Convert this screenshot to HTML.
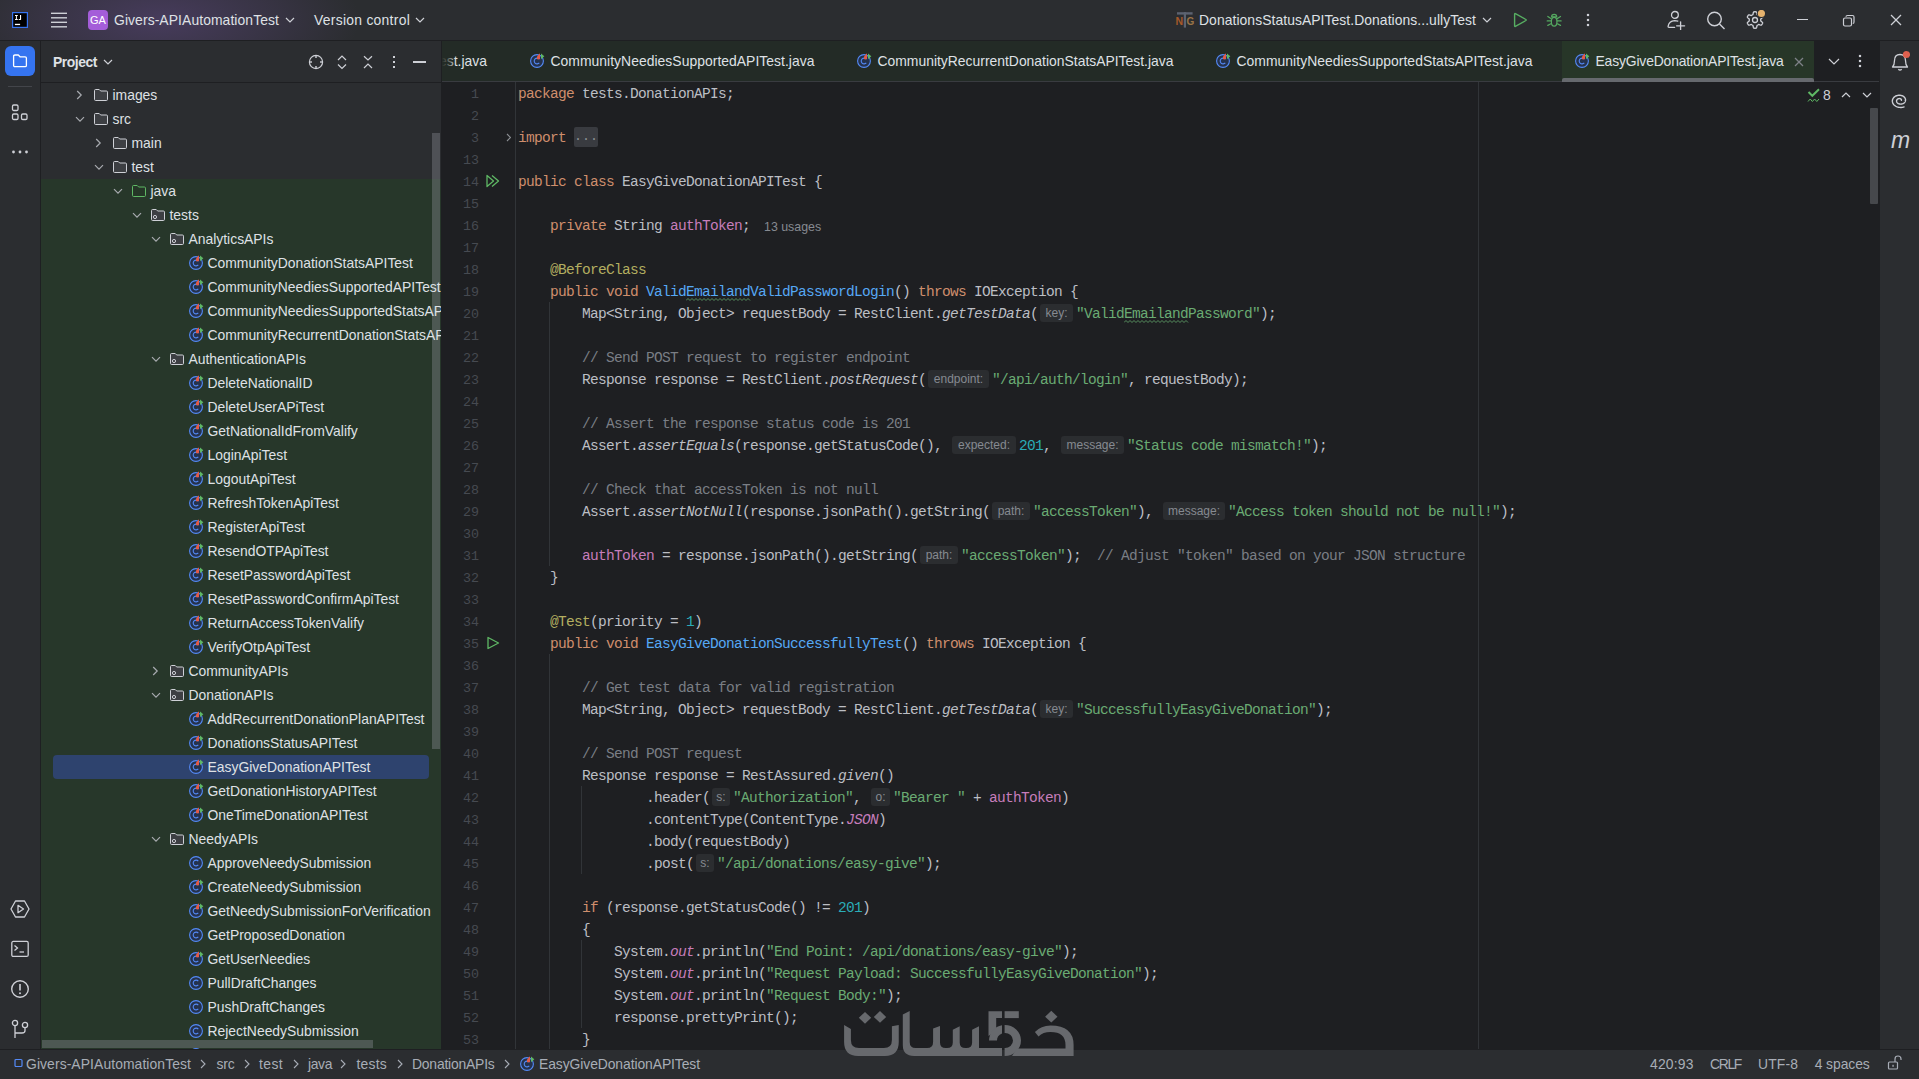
<!DOCTYPE html><html><head><meta charset="utf-8"><title>IntelliJ</title><style>
*{margin:0;padding:0;box-sizing:border-box;}
html,body{width:1919px;height:1079px;overflow:hidden;background:#2B2D30;}
body{position:relative;font-family:"Liberation Sans", sans-serif;}
.r,.t,.s,.c,.ln,.hint,.fold{position:absolute;}
.t{white-space:pre;}
.c{white-space:pre;font-family:"Liberation Mono", monospace;font-size:14.5px;letter-spacing:-0.7px;line-height:22px;height:22px;}
.ln{left:0;width:37px;text-align:right;font-family:"Liberation Mono", monospace;font-size:13.333px;line-height:22px;color:#464A51;}
.hint{height:18px;line-height:18px;border-radius:3px;background:#2B2D30;color:#868A91;font-family:"Liberation Sans", sans-serif;font-size:12px;text-align:center;white-space:pre;}
.fold{width:24px;height:20px;line-height:20px;background:#393B40;color:#8C8F94;font-family:"Liberation Mono", monospace;font-size:13.333px;border-radius:2px;text-align:center;}
</style></head><body><div class="r" style="left:0px;top:0px;width:1919px;height:1079px;background:#2B2D30;"></div><div class="r" style="left:0;top:0;width:700px;height:40px;background:radial-gradient(ellipse 200px 80px at 160px 20px, rgba(120,85,170,0.36), rgba(120,85,170,0.17) 55%, rgba(43,45,48,0) 100%);"></div><div class="r" style="left:0px;top:40px;width:1919px;height:1px;background:#1E1F22;"></div><div class="r" style="left:40px;top:41px;width:1px;height:1008px;background:#1E1F22;"></div><div class="r" style="left:441px;top:41px;width:1px;height:1008px;background:#1E1F22;"></div><div class="r" style="left:442px;top:41px;width:1438px;height:1008px;background:#1E1F22;"></div><div class="r" style="left:1879px;top:41px;width:1px;height:1008px;background:#1E1F22;"></div><div class="r" style="left:0px;top:1049px;width:1919px;height:1px;background:#1E1F22;"></div><svg class="s" style="left:12px;top:12px;" width="16" height="16" viewBox="0 0 16 16"><rect x="0.6" y="0.6" width="14.8" height="14.8" fill="#000" stroke="#3574F0" stroke-width="1.2"/><g fill="#fff"><rect x="3" y="3" width="2.8" height="1"/><rect x="3.9" y="3" width="1" height="5"/><rect x="3" y="7" width="2.8" height="1"/><rect x="8" y="3" width="1.1" height="4.6"/><rect x="6.7" y="7" width="2.2" height="1"/><rect x="2.9" y="11.8" width="5.2" height="1.3"/></g></svg><svg class="s" style="left:51px;top:12px;" width="16" height="16" viewBox="0 0 16 16"><rect x="0" y="0.6" width="16" height="1.4" fill="#CED0D6"/><rect x="0" y="5.1" width="16" height="1.4" fill="#CED0D6"/><rect x="0" y="9.6" width="16" height="1.4" fill="#CED0D6"/><rect x="0" y="14.1" width="16" height="1.4" fill="#CED0D6"/></svg><svg class="s" style="left:88px;top:10px;" width="20" height="20" viewBox="0 0 20 20"><rect x="0" y="0" width="20" height="20" rx="4" fill="#A45DD9"/><text x="10" y="14.3" text-anchor="middle" font-family="Liberation Sans" font-size="11" fill="#fff">GA</text></svg><svg class="s" style="left:285.0px;top:17.0px;" width="10" height="6.0" viewBox="0 0 10 6.0"><polyline points="1,1 5.0,5.0 9,1" fill="none" stroke="#CED0D6" stroke-width="1.2"/></svg><svg class="s" style="left:415.0px;top:17.0px;" width="10" height="6.0" viewBox="0 0 10 6.0"><polyline points="1,1 5.0,5.0 9,1" fill="none" stroke="#CED0D6" stroke-width="1.2"/></svg><svg class="s" style="left:1175px;top:11px;" width="20" height="18" viewBox="0 0 20 18"><rect x="2" y="1.2" width="15.6" height="2.4" fill="#5C6370"/><rect x="8.8" y="1.2" width="2.2" height="15.4" fill="#5C6370"/><text x="0.6" y="14" font-family="Liberation Sans" font-weight="bold" font-size="10.5" fill="#A65A2A">N</text><text x="11.6" y="14" font-family="Liberation Sans" font-weight="bold" font-size="10" fill="#9A7447">G</text></svg><svg class="s" style="left:1482.0px;top:17.0px;" width="10" height="6.0" viewBox="0 0 10 6.0"><polyline points="1,1 5.0,5.0 9,1" fill="none" stroke="#CED0D6" stroke-width="1.2"/></svg><svg class="s" style="left:1512px;top:12px;" width="16" height="16" viewBox="0 0 16 16"><path d="M2.6 2.2 Q2.6 1.3 3.4 1.7 L13.9 7.5 Q14.5 8 13.9 8.5 L3.4 14.3 Q2.6 14.7 2.6 13.8 Z" fill="none" stroke="#57AE62" stroke-width="1.4" stroke-linejoin="round"/></svg><svg class="s" style="left:1545px;top:11px;" width="18" height="18" viewBox="0 0 18 18"><g fill="none" stroke="#55A860" stroke-width="1.25" stroke-linecap="round"><ellipse cx="9.15" cy="10.8" rx="2.8" ry="4.4"/><path d="M6.6 5.9 A2.55 2.55 0 0 1 11.7 5.9 Z"/><line x1="2.8" y1="5.5" x2="5.9" y2="7.6"/><line x1="15.5" y1="5.5" x2="12.4" y2="7.6"/><line x1="2.2" y1="9.9" x2="6" y2="9.9"/><line x1="12.3" y1="9.9" x2="16.1" y2="9.9"/><line x1="5.9" y1="12.8" x2="2.8" y2="14.4"/><line x1="12.4" y1="12.8" x2="15.5" y2="14.4"/></g></svg><svg class="s" style="left:1585px;top:12px;" width="6" height="16" viewBox="0 0 6 16"><rect x="1.9" y="1.9" width="2.2" height="2.2" fill="#CED0D6"/><rect x="1.9" y="6.9" width="2.2" height="2.2" fill="#CED0D6"/><rect x="1.9" y="11.9" width="2.2" height="2.2" fill="#CED0D6"/></svg><svg class="s" style="left:1666px;top:10px;" width="20" height="20" viewBox="0 0 20 20"><g fill="none" stroke="#CED0D6" stroke-width="1.3" stroke-linecap="round"><circle cx="8.9" cy="4.9" r="3.4"/><path d="M11.8 11.1 Q10.4 10.6 8.7 10.6 Q2.9 10.8 2.1 16.4 Q2 17.4 3 17.4 H8.6"/><line x1="14.6" y1="11.8" x2="14.6" y2="19.8"/><line x1="10.6" y1="15.8" x2="18.6" y2="15.8"/></g></svg><svg class="s" style="left:1706px;top:10px;" width="20" height="20" viewBox="0 0 20 20"><g fill="none" stroke="#CED0D6" stroke-width="1.4"><circle cx="8.5" cy="9" r="6.8"/><line x1="13.5" y1="14" x2="18.5" y2="19"/></g></svg><svg class="s" style="left:1745px;top:10px;" width="22" height="22" viewBox="0 0 22 22"><g fill="none" stroke="#CED0D6" stroke-width="1.3"><polygon points="15.75,10.00 15.74,10.30 15.72,10.60 15.68,10.90 16.17,11.31 16.76,11.81 17.32,12.38 17.70,12.96 17.54,13.36 17.35,13.75 17.14,14.12 16.92,14.49 16.67,14.85 16.41,15.19 15.72,15.15 14.95,14.95 14.22,14.69 13.62,14.47 13.38,14.65 13.13,14.82 12.88,14.98 12.61,15.12 12.34,15.25 12.06,15.37 11.95,16.00 11.81,16.76 11.60,17.53 11.29,18.15 10.86,18.20 10.43,18.24 10.00,18.25 9.57,18.24 9.14,18.20 8.71,18.15 8.40,17.53 8.19,16.76 8.05,16.00 7.94,15.37 7.66,15.25 7.39,15.12 7.13,14.98 6.87,14.82 6.62,14.65 6.38,14.47 5.78,14.69 5.05,14.95 4.28,15.15 3.59,15.19 3.33,14.85 3.08,14.49 2.86,14.12 2.65,13.75 2.46,13.36 2.30,12.96 2.68,12.38 3.24,11.81 3.83,11.31 4.32,10.90 4.28,10.60 4.26,10.30 4.25,10.00 4.26,9.70 4.28,9.40 4.32,9.10 3.83,8.69 3.24,8.19 2.68,7.62 2.30,7.04 2.46,6.64 2.65,6.25 2.86,5.87 3.08,5.51 3.33,5.15 3.59,4.81 4.28,4.85 5.05,5.05 5.78,5.31 6.38,5.53 6.62,5.35 6.87,5.18 7.12,5.02 7.39,4.88 7.66,4.75 7.94,4.63 8.05,4.00 8.19,3.24 8.40,2.47 8.71,1.85 9.14,1.80 9.57,1.76 10.00,1.75 10.43,1.76 10.86,1.80 11.29,1.85 11.60,2.47 11.81,3.24 11.95,4.00 12.06,4.63 12.34,4.75 12.61,4.88 12.88,5.02 13.13,5.18 13.38,5.35 13.62,5.53 14.22,5.31 14.95,5.05 15.72,4.85 16.41,4.81 16.67,5.15 16.92,5.51 17.14,5.87 17.35,6.25 17.54,6.64 17.70,7.04 17.32,7.62 16.76,8.19 16.17,8.69 15.68,9.10 15.72,9.40 15.74,9.70" stroke-linejoin="round"/><circle cx="10" cy="10" r="2.5"/></g><circle cx="16.4" cy="3.5" r="4.6" fill="#2B2D30"/><circle cx="16.4" cy="3.5" r="3.6" fill="#E5B26D"/></svg><div class="r" style="left:1797px;top:19px;width:11px;height:1.3px;background:#CED0D6;"></div><svg class="s" style="left:1842px;top:14px;" width="14" height="13" viewBox="0 0 14 13"><g fill="none" stroke="#CED0D6" stroke-width="1.2"><rect x="1.5" y="4" width="8" height="8" rx="1.5"/><path d="M4 2.8 Q4 1.5 5.5 1.5 H10.5 Q12 1.5 12 3 V8 Q12 9.5 10.8 9.5"/></g></svg><svg class="s" style="left:1889px;top:13px;" width="14" height="14" viewBox="0 0 14 14"><g stroke="#CED0D6" stroke-width="1.3"><line x1="2" y1="2" x2="12" y2="12"/><line x1="12" y1="2" x2="2" y2="12"/></g></svg><div class="t" style="left:114px;top:0px;height:40px;line-height:40px;font-size:13.9px;color:#DFE1E5;font-weight:normal;letter-spacing:0.088px;">Givers-APIAutomationTest</div><div class="t" style="left:314px;top:0px;height:40px;line-height:40px;font-size:13.9px;color:#DFE1E5;font-weight:normal;letter-spacing:0.274px;">Version control</div><div class="t" style="left:1199px;top:0px;height:40px;line-height:40px;font-size:13.9px;color:#DFE1E5;font-weight:normal;letter-spacing:0.067px;">DonationsStatusAPITest.Donations...ullyTest</div><div class="r" style="left:5px;top:46px;width:30px;height:30px;border-radius:6px;background:#3574F0;"></div><svg class="s" style="left:12px;top:53px;" width="16" height="16" viewBox="0 0 16 16"><path d="M1.6 3.3 Q1.6 2 2.9 2 H6.3 L8 3.8 H13.1 Q14.4 3.8 14.4 5.1 V12.4 Q14.4 13.7 13.1 13.7 H2.9 Q1.6 13.7 1.6 12.4 Z" fill="none" stroke="#fff" stroke-width="1.3" stroke-linejoin="round"/></svg><div class="r" style="left:8px;top:86px;width:24px;height:1px;background:#43454A;"></div><svg class="s" style="left:11px;top:104px;" width="18" height="18" viewBox="0 0 18 18"><g fill="none" stroke="#CED0D6" stroke-width="1.3"><rect x="1.5" y="1" width="5.5" height="5.5" rx="1.3"/><rect x="1.5" y="10" width="5.5" height="5.5" rx="1.3"/><rect x="10.5" y="10" width="5.5" height="5.5" rx="1.3"/></g></svg><svg class="s" style="left:11px;top:148px;" width="18" height="8" viewBox="0 0 18 8"><circle cx="2.5" cy="4" r="1.4" fill="#CED0D6"/><circle cx="9" cy="4" r="1.4" fill="#CED0D6"/><circle cx="15.5" cy="4" r="1.4" fill="#CED0D6"/></svg><svg class="s" style="left:10px;top:899px;" width="20" height="20" viewBox="0 0 20 20"><g fill="none" stroke="#CED0D6" stroke-width="1.3" stroke-linejoin="round"><path d="M5.5 2 H14.5 L19 10 L14.5 18 H5.5 L1 10 Z"/><path d="M8 6.3 L13.5 10 L8 13.7 Z"/></g></svg><svg class="s" style="left:10px;top:940px;" width="20" height="18" viewBox="0 0 20 18"><g fill="none" stroke="#CED0D6" stroke-width="1.3"><rect x="1.8" y="1.4" width="16.4" height="15" rx="1.5"/><polyline points="4.5,5.5 7.5,8 4.5,10.5"/><line x1="9.5" y1="12" x2="14" y2="12"/></g></svg><svg class="s" style="left:10px;top:979px;" width="20" height="20" viewBox="0 0 20 20"><g fill="none" stroke="#CED0D6" stroke-width="1.4"><circle cx="10" cy="10" r="8.3"/></g><rect x="9.2" y="5" width="1.6" height="6.5" fill="#CED0D6"/><circle cx="10" cy="14.2" r="1" fill="#CED0D6"/></svg><svg class="s" style="left:10px;top:1019px;" width="20" height="20" viewBox="0 0 20 20"><g fill="none" stroke="#CED0D6" stroke-width="1.3"><circle cx="5" cy="4" r="2.6"/><circle cx="15" cy="6" r="2.6"/><line x1="5" y1="6.6" x2="5" y2="19"/><path d="M15 8.6 V11.5 Q15 14 12 14 H5"/></g></svg><div class="r" style="left:41px;top:82px;width:400px;height:1px;background:#1E1F22;"></div><svg class="s" style="left:103.0px;top:59.0px;" width="10" height="6.0" viewBox="0 0 10 6.0"><polyline points="1,1 5.0,5.0 9,1" fill="none" stroke="#CED0D6" stroke-width="1.2"/></svg><svg class="s" style="left:307px;top:53px;" width="18" height="18" viewBox="0 0 18 18"><g fill="none" stroke="#CED0D6" stroke-width="1.2"><circle cx="9" cy="9" r="6.6"/></g><g stroke="#CED0D6" stroke-width="1.4"><line x1="9" y1="2.6" x2="9" y2="5"/><line x1="9" y1="13" x2="9" y2="15.4"/><line x1="2.6" y1="9" x2="5" y2="9"/><line x1="13" y1="9" x2="15.4" y2="9"/></g></svg><svg class="s" style="left:336px;top:54px;" width="12" height="16" viewBox="0 0 12 16"><g fill="none" stroke="#CED0D6" stroke-width="1.2"><polyline points="2,6 6,2 10,6"/><polyline points="2,10.5 6,14.5 10,10.5"/></g></svg><svg class="s" style="left:362px;top:54px;" width="12" height="16" viewBox="0 0 12 16"><g fill="none" stroke="#CED0D6" stroke-width="1.2"><polyline points="2,2.2 6,6 10,2.2"/><polyline points="2,14 6,10 10,14"/></g></svg><svg class="s" style="left:392px;top:54px;" width="4" height="16" viewBox="0 0 4 16"><rect x="1" y="2" width="2" height="2" fill="#CED0D6"/><rect x="1" y="7" width="2" height="2" fill="#CED0D6"/><rect x="1" y="12" width="2" height="2" fill="#CED0D6"/></svg><div class="r" style="left:413px;top:61.3px;width:13px;height:1.5px;background:#CED0D6;"></div><div class="r" style="left:41px;top:179px;width:400px;height:870px;background:#27372A;"></div><div class="r" style="left:53px;top:755px;width:376px;height:24px;border-radius:4px;background:#2E436E;"></div><div class="t" style="left:53px;top:42px;height:41px;line-height:41px;font-size:13.9px;color:#DFE1E5;font-weight:bold;letter-spacing:-0.442px;">Project</div><div class="r" style="left:432px;top:133px;width:8px;height:616px;border-radius:0px;background:rgba(140,143,150,0.38);"></div><div class="r" style="left:42px;top:1040px;width:331px;height:8px;border-radius:0px;background:rgba(140,143,150,0.38);"></div><div class="r" style="left:41px;top:83px;width:400px;height:966px;overflow:hidden;"><svg class="s" style="left:35.0px;top:7px" width="7" height="10" viewBox="0 0 7 10"><polyline points="1.2,1 5.2,5 1.2,9" fill="none" stroke="#A8ABB0" stroke-width="1.2"/></svg><svg class="s" style="left:52px;top:4px;" width="16" height="16" viewBox="0 0 16 16"><path d="M1.5 3.6 Q1.5 2.5 2.6 2.5 H6.2 L7.7 4 H13.4 Q14.5 4 14.5 5.1 V12.4 Q14.5 13.5 13.4 13.5 H2.6 Q1.5 13.5 1.5 12.4 Z" fill="#3D3F43" stroke="#CED0D6" stroke-width="1"/></svg><svg class="s" style="left:33.5px;top:32.5px" width="10" height="7" viewBox="0 0 10 7"><polyline points="1,1.2 5,5.2 9,1.2" fill="none" stroke="#A8ABB0" stroke-width="1.2"/></svg><svg class="s" style="left:52px;top:28px;" width="16" height="16" viewBox="0 0 16 16"><path d="M1.5 3.6 Q1.5 2.5 2.6 2.5 H6.2 L7.7 4 H13.4 Q14.5 4 14.5 5.1 V12.4 Q14.5 13.5 13.4 13.5 H2.6 Q1.5 13.5 1.5 12.4 Z" fill="#3D3F43" stroke="#CED0D6" stroke-width="1"/></svg><svg class="s" style="left:54.0px;top:55px" width="7" height="10" viewBox="0 0 7 10"><polyline points="1.2,1 5.2,5 1.2,9" fill="none" stroke="#A8ABB0" stroke-width="1.2"/></svg><svg class="s" style="left:71px;top:52px;" width="16" height="16" viewBox="0 0 16 16"><path d="M1.5 3.6 Q1.5 2.5 2.6 2.5 H6.2 L7.7 4 H13.4 Q14.5 4 14.5 5.1 V12.4 Q14.5 13.5 13.4 13.5 H2.6 Q1.5 13.5 1.5 12.4 Z" fill="#3D3F43" stroke="#CED0D6" stroke-width="1"/></svg><svg class="s" style="left:52.5px;top:80.5px" width="10" height="7" viewBox="0 0 10 7"><polyline points="1,1.2 5,5.2 9,1.2" fill="none" stroke="#A8ABB0" stroke-width="1.2"/></svg><svg class="s" style="left:71px;top:76px;" width="16" height="16" viewBox="0 0 16 16"><path d="M1.5 3.6 Q1.5 2.5 2.6 2.5 H6.2 L7.7 4 H13.4 Q14.5 4 14.5 5.1 V12.4 Q14.5 13.5 13.4 13.5 H2.6 Q1.5 13.5 1.5 12.4 Z" fill="#3D3F43" stroke="#CED0D6" stroke-width="1"/></svg><svg class="s" style="left:71.5px;top:104.5px" width="10" height="7" viewBox="0 0 10 7"><polyline points="1,1.2 5,5.2 9,1.2" fill="none" stroke="#A8ABB0" stroke-width="1.2"/></svg><svg class="s" style="left:90px;top:100px;" width="16" height="16" viewBox="0 0 16 16"><path d="M1.5 3.6 Q1.5 2.5 2.6 2.5 H6.2 L7.7 4 H13.4 Q14.5 4 14.5 5.1 V12.4 Q14.5 13.5 13.4 13.5 H2.6 Q1.5 13.5 1.5 12.4 Z" fill="#253627" stroke="#5FB865" stroke-width="1"/></svg><svg class="s" style="left:90.5px;top:128.5px" width="10" height="7" viewBox="0 0 10 7"><polyline points="1,1.2 5,5.2 9,1.2" fill="none" stroke="#A8ABB0" stroke-width="1.2"/></svg><svg class="s" style="left:109px;top:124px;" width="16" height="16" viewBox="0 0 16 16"><path d="M1.5 3.6 Q1.5 2.5 2.6 2.5 H6.2 L7.7 4 H13.4 Q14.5 4 14.5 5.1 V12.4 Q14.5 13.5 13.4 13.5 H2.6 Q1.5 13.5 1.5 12.4 Z" fill="#3D3F43" stroke="#CED0D6" stroke-width="1"/><circle cx="5" cy="10" r="1.6" fill="none" stroke="#CED0D6" stroke-width="1"/></svg><svg class="s" style="left:109.5px;top:152.5px" width="10" height="7" viewBox="0 0 10 7"><polyline points="1,1.2 5,5.2 9,1.2" fill="none" stroke="#A8ABB0" stroke-width="1.2"/></svg><svg class="s" style="left:128px;top:148px;" width="16" height="16" viewBox="0 0 16 16"><path d="M1.5 3.6 Q1.5 2.5 2.6 2.5 H6.2 L7.7 4 H13.4 Q14.5 4 14.5 5.1 V12.4 Q14.5 13.5 13.4 13.5 H2.6 Q1.5 13.5 1.5 12.4 Z" fill="#3D3F43" stroke="#CED0D6" stroke-width="1"/><circle cx="5" cy="10" r="1.6" fill="none" stroke="#CED0D6" stroke-width="1"/></svg><svg class="s" style="left:147px;top:172px;" width="16" height="16" viewBox="0 0 16 16"><circle cx="8" cy="8" r="6.4" fill="#25324D" stroke="#548AF7" stroke-width="1.1"/><path d="M10.3 6.1 A2.9 2.9 0 1 0 10.3 9.9" fill="none" stroke="#548AF7" stroke-width="1.1"/><path d="M11 0.2 L11 6.3 L8 6.3 L8 3.6 Z" fill="#E35A48"/><path d="M12 0.4 L15.3 3.3 L12 6.2 Z" fill="#5FB865"/></svg><svg class="s" style="left:147px;top:196px;" width="16" height="16" viewBox="0 0 16 16"><circle cx="8" cy="8" r="6.4" fill="#25324D" stroke="#548AF7" stroke-width="1.1"/><path d="M10.3 6.1 A2.9 2.9 0 1 0 10.3 9.9" fill="none" stroke="#548AF7" stroke-width="1.1"/><path d="M11 0.2 L11 6.3 L8 6.3 L8 3.6 Z" fill="#E35A48"/><path d="M12 0.4 L15.3 3.3 L12 6.2 Z" fill="#5FB865"/></svg><svg class="s" style="left:147px;top:220px;" width="16" height="16" viewBox="0 0 16 16"><circle cx="8" cy="8" r="6.4" fill="#25324D" stroke="#548AF7" stroke-width="1.1"/><path d="M10.3 6.1 A2.9 2.9 0 1 0 10.3 9.9" fill="none" stroke="#548AF7" stroke-width="1.1"/><path d="M11 0.2 L11 6.3 L8 6.3 L8 3.6 Z" fill="#E35A48"/><path d="M12 0.4 L15.3 3.3 L12 6.2 Z" fill="#5FB865"/></svg><svg class="s" style="left:147px;top:244px;" width="16" height="16" viewBox="0 0 16 16"><circle cx="8" cy="8" r="6.4" fill="#25324D" stroke="#548AF7" stroke-width="1.1"/><path d="M10.3 6.1 A2.9 2.9 0 1 0 10.3 9.9" fill="none" stroke="#548AF7" stroke-width="1.1"/><path d="M11 0.2 L11 6.3 L8 6.3 L8 3.6 Z" fill="#E35A48"/><path d="M12 0.4 L15.3 3.3 L12 6.2 Z" fill="#5FB865"/></svg><svg class="s" style="left:109.5px;top:272.5px" width="10" height="7" viewBox="0 0 10 7"><polyline points="1,1.2 5,5.2 9,1.2" fill="none" stroke="#A8ABB0" stroke-width="1.2"/></svg><svg class="s" style="left:128px;top:268px;" width="16" height="16" viewBox="0 0 16 16"><path d="M1.5 3.6 Q1.5 2.5 2.6 2.5 H6.2 L7.7 4 H13.4 Q14.5 4 14.5 5.1 V12.4 Q14.5 13.5 13.4 13.5 H2.6 Q1.5 13.5 1.5 12.4 Z" fill="#3D3F43" stroke="#CED0D6" stroke-width="1"/><circle cx="5" cy="10" r="1.6" fill="none" stroke="#CED0D6" stroke-width="1"/></svg><svg class="s" style="left:147px;top:292px;" width="16" height="16" viewBox="0 0 16 16"><circle cx="8" cy="8" r="6.4" fill="#25324D" stroke="#548AF7" stroke-width="1.1"/><path d="M10.3 6.1 A2.9 2.9 0 1 0 10.3 9.9" fill="none" stroke="#548AF7" stroke-width="1.1"/><path d="M11 0.2 L11 6.3 L8 6.3 L8 3.6 Z" fill="#E35A48"/><path d="M12 0.4 L15.3 3.3 L12 6.2 Z" fill="#5FB865"/></svg><svg class="s" style="left:147px;top:316px;" width="16" height="16" viewBox="0 0 16 16"><circle cx="8" cy="8" r="6.4" fill="#25324D" stroke="#548AF7" stroke-width="1.1"/><path d="M10.3 6.1 A2.9 2.9 0 1 0 10.3 9.9" fill="none" stroke="#548AF7" stroke-width="1.1"/><path d="M11 0.2 L11 6.3 L8 6.3 L8 3.6 Z" fill="#E35A48"/><path d="M12 0.4 L15.3 3.3 L12 6.2 Z" fill="#5FB865"/></svg><svg class="s" style="left:147px;top:340px;" width="16" height="16" viewBox="0 0 16 16"><circle cx="8" cy="8" r="6.4" fill="#25324D" stroke="#548AF7" stroke-width="1.1"/><path d="M10.3 6.1 A2.9 2.9 0 1 0 10.3 9.9" fill="none" stroke="#548AF7" stroke-width="1.1"/><path d="M11 0.2 L11 6.3 L8 6.3 L8 3.6 Z" fill="#E35A48"/><path d="M12 0.4 L15.3 3.3 L12 6.2 Z" fill="#5FB865"/></svg><svg class="s" style="left:147px;top:364px;" width="16" height="16" viewBox="0 0 16 16"><circle cx="8" cy="8" r="6.4" fill="#25324D" stroke="#548AF7" stroke-width="1.1"/><path d="M10.3 6.1 A2.9 2.9 0 1 0 10.3 9.9" fill="none" stroke="#548AF7" stroke-width="1.1"/><path d="M11 0.2 L11 6.3 L8 6.3 L8 3.6 Z" fill="#E35A48"/><path d="M12 0.4 L15.3 3.3 L12 6.2 Z" fill="#5FB865"/></svg><svg class="s" style="left:147px;top:388px;" width="16" height="16" viewBox="0 0 16 16"><circle cx="8" cy="8" r="6.4" fill="#25324D" stroke="#548AF7" stroke-width="1.1"/><path d="M10.3 6.1 A2.9 2.9 0 1 0 10.3 9.9" fill="none" stroke="#548AF7" stroke-width="1.1"/><path d="M11 0.2 L11 6.3 L8 6.3 L8 3.6 Z" fill="#E35A48"/><path d="M12 0.4 L15.3 3.3 L12 6.2 Z" fill="#5FB865"/></svg><svg class="s" style="left:147px;top:412px;" width="16" height="16" viewBox="0 0 16 16"><circle cx="8" cy="8" r="6.4" fill="#25324D" stroke="#548AF7" stroke-width="1.1"/><path d="M10.3 6.1 A2.9 2.9 0 1 0 10.3 9.9" fill="none" stroke="#548AF7" stroke-width="1.1"/><path d="M11 0.2 L11 6.3 L8 6.3 L8 3.6 Z" fill="#E35A48"/><path d="M12 0.4 L15.3 3.3 L12 6.2 Z" fill="#5FB865"/></svg><svg class="s" style="left:147px;top:436px;" width="16" height="16" viewBox="0 0 16 16"><circle cx="8" cy="8" r="6.4" fill="#25324D" stroke="#548AF7" stroke-width="1.1"/><path d="M10.3 6.1 A2.9 2.9 0 1 0 10.3 9.9" fill="none" stroke="#548AF7" stroke-width="1.1"/><path d="M11 0.2 L11 6.3 L8 6.3 L8 3.6 Z" fill="#E35A48"/><path d="M12 0.4 L15.3 3.3 L12 6.2 Z" fill="#5FB865"/></svg><svg class="s" style="left:147px;top:460px;" width="16" height="16" viewBox="0 0 16 16"><circle cx="8" cy="8" r="6.4" fill="#25324D" stroke="#548AF7" stroke-width="1.1"/><path d="M10.3 6.1 A2.9 2.9 0 1 0 10.3 9.9" fill="none" stroke="#548AF7" stroke-width="1.1"/><path d="M11 0.2 L11 6.3 L8 6.3 L8 3.6 Z" fill="#E35A48"/><path d="M12 0.4 L15.3 3.3 L12 6.2 Z" fill="#5FB865"/></svg><svg class="s" style="left:147px;top:484px;" width="16" height="16" viewBox="0 0 16 16"><circle cx="8" cy="8" r="6.4" fill="#25324D" stroke="#548AF7" stroke-width="1.1"/><path d="M10.3 6.1 A2.9 2.9 0 1 0 10.3 9.9" fill="none" stroke="#548AF7" stroke-width="1.1"/><path d="M11 0.2 L11 6.3 L8 6.3 L8 3.6 Z" fill="#E35A48"/><path d="M12 0.4 L15.3 3.3 L12 6.2 Z" fill="#5FB865"/></svg><svg class="s" style="left:147px;top:508px;" width="16" height="16" viewBox="0 0 16 16"><circle cx="8" cy="8" r="6.4" fill="#25324D" stroke="#548AF7" stroke-width="1.1"/><path d="M10.3 6.1 A2.9 2.9 0 1 0 10.3 9.9" fill="none" stroke="#548AF7" stroke-width="1.1"/><path d="M11 0.2 L11 6.3 L8 6.3 L8 3.6 Z" fill="#E35A48"/><path d="M12 0.4 L15.3 3.3 L12 6.2 Z" fill="#5FB865"/></svg><svg class="s" style="left:147px;top:532px;" width="16" height="16" viewBox="0 0 16 16"><circle cx="8" cy="8" r="6.4" fill="#25324D" stroke="#548AF7" stroke-width="1.1"/><path d="M10.3 6.1 A2.9 2.9 0 1 0 10.3 9.9" fill="none" stroke="#548AF7" stroke-width="1.1"/><path d="M11 0.2 L11 6.3 L8 6.3 L8 3.6 Z" fill="#E35A48"/><path d="M12 0.4 L15.3 3.3 L12 6.2 Z" fill="#5FB865"/></svg><svg class="s" style="left:147px;top:556px;" width="16" height="16" viewBox="0 0 16 16"><circle cx="8" cy="8" r="6.4" fill="#25324D" stroke="#548AF7" stroke-width="1.1"/><path d="M10.3 6.1 A2.9 2.9 0 1 0 10.3 9.9" fill="none" stroke="#548AF7" stroke-width="1.1"/><path d="M11 0.2 L11 6.3 L8 6.3 L8 3.6 Z" fill="#E35A48"/><path d="M12 0.4 L15.3 3.3 L12 6.2 Z" fill="#5FB865"/></svg><svg class="s" style="left:111.0px;top:583px" width="7" height="10" viewBox="0 0 7 10"><polyline points="1.2,1 5.2,5 1.2,9" fill="none" stroke="#A8ABB0" stroke-width="1.2"/></svg><svg class="s" style="left:128px;top:580px;" width="16" height="16" viewBox="0 0 16 16"><path d="M1.5 3.6 Q1.5 2.5 2.6 2.5 H6.2 L7.7 4 H13.4 Q14.5 4 14.5 5.1 V12.4 Q14.5 13.5 13.4 13.5 H2.6 Q1.5 13.5 1.5 12.4 Z" fill="#3D3F43" stroke="#CED0D6" stroke-width="1"/><circle cx="5" cy="10" r="1.6" fill="none" stroke="#CED0D6" stroke-width="1"/></svg><svg class="s" style="left:109.5px;top:608.5px" width="10" height="7" viewBox="0 0 10 7"><polyline points="1,1.2 5,5.2 9,1.2" fill="none" stroke="#A8ABB0" stroke-width="1.2"/></svg><svg class="s" style="left:128px;top:604px;" width="16" height="16" viewBox="0 0 16 16"><path d="M1.5 3.6 Q1.5 2.5 2.6 2.5 H6.2 L7.7 4 H13.4 Q14.5 4 14.5 5.1 V12.4 Q14.5 13.5 13.4 13.5 H2.6 Q1.5 13.5 1.5 12.4 Z" fill="#3D3F43" stroke="#CED0D6" stroke-width="1"/><circle cx="5" cy="10" r="1.6" fill="none" stroke="#CED0D6" stroke-width="1"/></svg><svg class="s" style="left:147px;top:628px;" width="16" height="16" viewBox="0 0 16 16"><circle cx="8" cy="8" r="6.4" fill="#25324D" stroke="#548AF7" stroke-width="1.1"/><path d="M10.3 6.1 A2.9 2.9 0 1 0 10.3 9.9" fill="none" stroke="#548AF7" stroke-width="1.1"/><path d="M11 0.2 L11 6.3 L8 6.3 L8 3.6 Z" fill="#E35A48"/><path d="M12 0.4 L15.3 3.3 L12 6.2 Z" fill="#5FB865"/></svg><svg class="s" style="left:147px;top:652px;" width="16" height="16" viewBox="0 0 16 16"><circle cx="8" cy="8" r="6.4" fill="#25324D" stroke="#548AF7" stroke-width="1.1"/><path d="M10.3 6.1 A2.9 2.9 0 1 0 10.3 9.9" fill="none" stroke="#548AF7" stroke-width="1.1"/><path d="M11 0.2 L11 6.3 L8 6.3 L8 3.6 Z" fill="#E35A48"/><path d="M12 0.4 L15.3 3.3 L12 6.2 Z" fill="#5FB865"/></svg><svg class="s" style="left:147px;top:676px;" width="16" height="16" viewBox="0 0 16 16"><circle cx="8" cy="8" r="6.4" fill="#25324D" stroke="#548AF7" stroke-width="1.1"/><path d="M10.3 6.1 A2.9 2.9 0 1 0 10.3 9.9" fill="none" stroke="#548AF7" stroke-width="1.1"/><path d="M11 0.2 L11 6.3 L8 6.3 L8 3.6 Z" fill="#E35A48"/><path d="M12 0.4 L15.3 3.3 L12 6.2 Z" fill="#5FB865"/></svg><svg class="s" style="left:147px;top:700px;" width="16" height="16" viewBox="0 0 16 16"><circle cx="8" cy="8" r="6.4" fill="#25324D" stroke="#548AF7" stroke-width="1.1"/><path d="M10.3 6.1 A2.9 2.9 0 1 0 10.3 9.9" fill="none" stroke="#548AF7" stroke-width="1.1"/><path d="M11 0.2 L11 6.3 L8 6.3 L8 3.6 Z" fill="#E35A48"/><path d="M12 0.4 L15.3 3.3 L12 6.2 Z" fill="#5FB865"/></svg><svg class="s" style="left:147px;top:724px;" width="16" height="16" viewBox="0 0 16 16"><circle cx="8" cy="8" r="6.4" fill="#25324D" stroke="#548AF7" stroke-width="1.1"/><path d="M10.3 6.1 A2.9 2.9 0 1 0 10.3 9.9" fill="none" stroke="#548AF7" stroke-width="1.1"/><path d="M11 0.2 L11 6.3 L8 6.3 L8 3.6 Z" fill="#E35A48"/><path d="M12 0.4 L15.3 3.3 L12 6.2 Z" fill="#5FB865"/></svg><svg class="s" style="left:109.5px;top:752.5px" width="10" height="7" viewBox="0 0 10 7"><polyline points="1,1.2 5,5.2 9,1.2" fill="none" stroke="#A8ABB0" stroke-width="1.2"/></svg><svg class="s" style="left:128px;top:748px;" width="16" height="16" viewBox="0 0 16 16"><path d="M1.5 3.6 Q1.5 2.5 2.6 2.5 H6.2 L7.7 4 H13.4 Q14.5 4 14.5 5.1 V12.4 Q14.5 13.5 13.4 13.5 H2.6 Q1.5 13.5 1.5 12.4 Z" fill="#3D3F43" stroke="#CED0D6" stroke-width="1"/><circle cx="5" cy="10" r="1.6" fill="none" stroke="#CED0D6" stroke-width="1"/></svg><svg class="s" style="left:147px;top:772px;" width="16" height="16" viewBox="0 0 16 16"><circle cx="8" cy="8" r="6.4" fill="#25324D" stroke="#548AF7" stroke-width="1.1"/><path d="M10.3 6.1 A2.9 2.9 0 1 0 10.3 9.9" fill="none" stroke="#548AF7" stroke-width="1.1"/></svg><svg class="s" style="left:147px;top:796px;" width="16" height="16" viewBox="0 0 16 16"><circle cx="8" cy="8" r="6.4" fill="#25324D" stroke="#548AF7" stroke-width="1.1"/><path d="M10.3 6.1 A2.9 2.9 0 1 0 10.3 9.9" fill="none" stroke="#548AF7" stroke-width="1.1"/><path d="M11 0.2 L11 6.3 L8 6.3 L8 3.6 Z" fill="#E35A48"/><path d="M12 0.4 L15.3 3.3 L12 6.2 Z" fill="#5FB865"/></svg><svg class="s" style="left:147px;top:820px;" width="16" height="16" viewBox="0 0 16 16"><circle cx="8" cy="8" r="6.4" fill="#25324D" stroke="#548AF7" stroke-width="1.1"/><path d="M10.3 6.1 A2.9 2.9 0 1 0 10.3 9.9" fill="none" stroke="#548AF7" stroke-width="1.1"/><path d="M11 0.2 L11 6.3 L8 6.3 L8 3.6 Z" fill="#E35A48"/><path d="M12 0.4 L15.3 3.3 L12 6.2 Z" fill="#5FB865"/></svg><svg class="s" style="left:147px;top:844px;" width="16" height="16" viewBox="0 0 16 16"><circle cx="8" cy="8" r="6.4" fill="#25324D" stroke="#548AF7" stroke-width="1.1"/><path d="M10.3 6.1 A2.9 2.9 0 1 0 10.3 9.9" fill="none" stroke="#548AF7" stroke-width="1.1"/></svg><svg class="s" style="left:147px;top:868px;" width="16" height="16" viewBox="0 0 16 16"><circle cx="8" cy="8" r="6.4" fill="#25324D" stroke="#548AF7" stroke-width="1.1"/><path d="M10.3 6.1 A2.9 2.9 0 1 0 10.3 9.9" fill="none" stroke="#548AF7" stroke-width="1.1"/><path d="M11 0.2 L11 6.3 L8 6.3 L8 3.6 Z" fill="#E35A48"/><path d="M12 0.4 L15.3 3.3 L12 6.2 Z" fill="#5FB865"/></svg><svg class="s" style="left:147px;top:892px;" width="16" height="16" viewBox="0 0 16 16"><circle cx="8" cy="8" r="6.4" fill="#25324D" stroke="#548AF7" stroke-width="1.1"/><path d="M10.3 6.1 A2.9 2.9 0 1 0 10.3 9.9" fill="none" stroke="#548AF7" stroke-width="1.1"/></svg><svg class="s" style="left:147px;top:916px;" width="16" height="16" viewBox="0 0 16 16"><circle cx="8" cy="8" r="6.4" fill="#25324D" stroke="#548AF7" stroke-width="1.1"/><path d="M10.3 6.1 A2.9 2.9 0 1 0 10.3 9.9" fill="none" stroke="#548AF7" stroke-width="1.1"/></svg><svg class="s" style="left:147px;top:940px;" width="16" height="16" viewBox="0 0 16 16"><circle cx="8" cy="8" r="6.4" fill="#25324D" stroke="#548AF7" stroke-width="1.1"/><path d="M10.3 6.1 A2.9 2.9 0 1 0 10.3 9.9" fill="none" stroke="#548AF7" stroke-width="1.1"/></svg><svg class="s" style="left:147px;top:964px;" width="16" height="16" viewBox="0 0 16 16"><circle cx="8" cy="8" r="6.4" fill="#25324D" stroke="#548AF7" stroke-width="1.1"/><path d="M10.3 6.1 A2.9 2.9 0 1 0 10.3 9.9" fill="none" stroke="#548AF7" stroke-width="1.1"/></svg><div class="t" style="left:71.5px;top:0px;height:24px;line-height:24px;font-size:13.9px;color:#DFE1E5;font-weight:normal;">images</div><div class="t" style="left:71.5px;top:24px;height:24px;line-height:24px;font-size:13.9px;color:#DFE1E5;font-weight:normal;">src</div><div class="t" style="left:90.5px;top:48px;height:24px;line-height:24px;font-size:13.9px;color:#DFE1E5;font-weight:normal;">main</div><div class="t" style="left:90.5px;top:72px;height:24px;line-height:24px;font-size:13.9px;color:#DFE1E5;font-weight:normal;">test</div><div class="t" style="left:109.5px;top:96px;height:24px;line-height:24px;font-size:13.9px;color:#DFE1E5;font-weight:normal;">java</div><div class="t" style="left:128.5px;top:120px;height:24px;line-height:24px;font-size:13.9px;color:#DFE1E5;font-weight:normal;">tests</div><div class="t" style="left:147.5px;top:144px;height:24px;line-height:24px;font-size:13.9px;color:#DFE1E5;font-weight:normal;">AnalyticsAPIs</div><div class="t" style="left:166.5px;top:168px;height:24px;line-height:24px;font-size:13.9px;color:#DFE1E5;font-weight:normal;">CommunityDonationStatsAPITest</div><div class="t" style="left:166.5px;top:192px;height:24px;line-height:24px;font-size:13.9px;color:#DFE1E5;font-weight:normal;">CommunityNeediesSupportedAPITest</div><div class="t" style="left:166.5px;top:216px;height:24px;line-height:24px;font-size:13.9px;color:#DFE1E5;font-weight:normal;">CommunityNeediesSupportedStatsAPITest</div><div class="t" style="left:166.5px;top:240px;height:24px;line-height:24px;font-size:13.9px;color:#DFE1E5;font-weight:normal;">CommunityRecurrentDonationStatsAPITest</div><div class="t" style="left:147.5px;top:264px;height:24px;line-height:24px;font-size:13.9px;color:#DFE1E5;font-weight:normal;">AuthenticationAPIs</div><div class="t" style="left:166.5px;top:288px;height:24px;line-height:24px;font-size:13.9px;color:#DFE1E5;font-weight:normal;">DeleteNationalID</div><div class="t" style="left:166.5px;top:312px;height:24px;line-height:24px;font-size:13.9px;color:#DFE1E5;font-weight:normal;">DeleteUserAPiTest</div><div class="t" style="left:166.5px;top:336px;height:24px;line-height:24px;font-size:13.9px;color:#DFE1E5;font-weight:normal;">GetNationalIdFromValify</div><div class="t" style="left:166.5px;top:360px;height:24px;line-height:24px;font-size:13.9px;color:#DFE1E5;font-weight:normal;">LoginApiTest</div><div class="t" style="left:166.5px;top:384px;height:24px;line-height:24px;font-size:13.9px;color:#DFE1E5;font-weight:normal;">LogoutApiTest</div><div class="t" style="left:166.5px;top:408px;height:24px;line-height:24px;font-size:13.9px;color:#DFE1E5;font-weight:normal;">RefreshTokenApiTest</div><div class="t" style="left:166.5px;top:432px;height:24px;line-height:24px;font-size:13.9px;color:#DFE1E5;font-weight:normal;">RegisterApiTest</div><div class="t" style="left:166.5px;top:456px;height:24px;line-height:24px;font-size:13.9px;color:#DFE1E5;font-weight:normal;">ResendOTPApiTest</div><div class="t" style="left:166.5px;top:480px;height:24px;line-height:24px;font-size:13.9px;color:#DFE1E5;font-weight:normal;">ResetPasswordApiTest</div><div class="t" style="left:166.5px;top:504px;height:24px;line-height:24px;font-size:13.9px;color:#DFE1E5;font-weight:normal;">ResetPasswordConfirmApiTest</div><div class="t" style="left:166.5px;top:528px;height:24px;line-height:24px;font-size:13.9px;color:#DFE1E5;font-weight:normal;">ReturnAccessTokenValify</div><div class="t" style="left:166.5px;top:552px;height:24px;line-height:24px;font-size:13.9px;color:#DFE1E5;font-weight:normal;">VerifyOtpApiTest</div><div class="t" style="left:147.5px;top:576px;height:24px;line-height:24px;font-size:13.9px;color:#DFE1E5;font-weight:normal;">CommunityAPIs</div><div class="t" style="left:147.5px;top:600px;height:24px;line-height:24px;font-size:13.9px;color:#DFE1E5;font-weight:normal;">DonationAPIs</div><div class="t" style="left:166.5px;top:624px;height:24px;line-height:24px;font-size:13.9px;color:#DFE1E5;font-weight:normal;">AddRecurrentDonationPlanAPITest</div><div class="t" style="left:166.5px;top:648px;height:24px;line-height:24px;font-size:13.9px;color:#DFE1E5;font-weight:normal;">DonationsStatusAPITest</div><div class="t" style="left:166.5px;top:672px;height:24px;line-height:24px;font-size:13.9px;color:#DFE1E5;font-weight:normal;">EasyGiveDonationAPITest</div><div class="t" style="left:166.5px;top:696px;height:24px;line-height:24px;font-size:13.9px;color:#DFE1E5;font-weight:normal;">GetDonationHistoryAPITest</div><div class="t" style="left:166.5px;top:720px;height:24px;line-height:24px;font-size:13.9px;color:#DFE1E5;font-weight:normal;">OneTimeDonationAPITest</div><div class="t" style="left:147.5px;top:744px;height:24px;line-height:24px;font-size:13.9px;color:#DFE1E5;font-weight:normal;">NeedyAPIs</div><div class="t" style="left:166.5px;top:768px;height:24px;line-height:24px;font-size:13.9px;color:#DFE1E5;font-weight:normal;">ApproveNeedySubmission</div><div class="t" style="left:166.5px;top:792px;height:24px;line-height:24px;font-size:13.9px;color:#DFE1E5;font-weight:normal;">CreateNeedySubmission</div><div class="t" style="left:166.5px;top:816px;height:24px;line-height:24px;font-size:13.9px;color:#DFE1E5;font-weight:normal;">GetNeedySubmissionForVerification</div><div class="t" style="left:166.5px;top:840px;height:24px;line-height:24px;font-size:13.9px;color:#DFE1E5;font-weight:normal;">GetProposedDonation</div><div class="t" style="left:166.5px;top:864px;height:24px;line-height:24px;font-size:13.9px;color:#DFE1E5;font-weight:normal;">GetUserNeedies</div><div class="t" style="left:166.5px;top:888px;height:24px;line-height:24px;font-size:13.9px;color:#DFE1E5;font-weight:normal;">PullDraftChanges</div><div class="t" style="left:166.5px;top:912px;height:24px;line-height:24px;font-size:13.9px;color:#DFE1E5;font-weight:normal;">PushDraftChanges</div><div class="t" style="left:166.5px;top:936px;height:24px;line-height:24px;font-size:13.9px;color:#DFE1E5;font-weight:normal;">RejectNeedySubmission</div><div class="t" style="left:166.5px;top:960px;height:24px;line-height:24px;font-size:13.9px;color:#DFE1E5;font-weight:normal;">SomethingHidden</div></div><div class="r" style="left:442px;top:81px;width:1437px;height:1px;background:#393B40;"></div><div class="r" style="left:442px;top:41px;width:1120px;height:40px;background:#232B26;"></div><div class="r" style="left:1562px;top:41px;width:252px;height:40px;background:#273628;"></div><div class="r" style="left:1562px;top:78px;width:252px;height:4px;border-radius:2px 2px 0 0;background:#66696E;"></div><div class="r" style="left:442px;top:41px;width:120px;height:40px;overflow:hidden;"><div class="t" style="left:-3px;top:0px;height:40px;line-height:40px;font-size:13.9px;color:#DFE1E5;font-weight:normal;">est.java</div><div class="r" style="left:0;top:0;width:14px;height:40px;background:linear-gradient(90deg,#232B26 0%,rgba(35,43,38,0.6) 50%,rgba(35,43,38,0));"></div></div><svg class="s" style="left:529px;top:53px;" width="16" height="16" viewBox="0 0 16 16"><circle cx="8" cy="8" r="6.4" fill="#25324D" stroke="#548AF7" stroke-width="1.1"/><path d="M10.3 6.1 A2.9 2.9 0 1 0 10.3 9.9" fill="none" stroke="#548AF7" stroke-width="1.1"/><path d="M11 0.2 L11 6.3 L8 6.3 L8 3.6 Z" fill="#E35A48"/><path d="M12 0.4 L15.3 3.3 L12 6.2 Z" fill="#5FB865"/></svg><svg class="s" style="left:856px;top:53px;" width="16" height="16" viewBox="0 0 16 16"><circle cx="8" cy="8" r="6.4" fill="#25324D" stroke="#548AF7" stroke-width="1.1"/><path d="M10.3 6.1 A2.9 2.9 0 1 0 10.3 9.9" fill="none" stroke="#548AF7" stroke-width="1.1"/><path d="M11 0.2 L11 6.3 L8 6.3 L8 3.6 Z" fill="#E35A48"/><path d="M12 0.4 L15.3 3.3 L12 6.2 Z" fill="#5FB865"/></svg><svg class="s" style="left:1215px;top:53px;" width="16" height="16" viewBox="0 0 16 16"><circle cx="8" cy="8" r="6.4" fill="#25324D" stroke="#548AF7" stroke-width="1.1"/><path d="M10.3 6.1 A2.9 2.9 0 1 0 10.3 9.9" fill="none" stroke="#548AF7" stroke-width="1.1"/><path d="M11 0.2 L11 6.3 L8 6.3 L8 3.6 Z" fill="#E35A48"/><path d="M12 0.4 L15.3 3.3 L12 6.2 Z" fill="#5FB865"/></svg><svg class="s" style="left:1574px;top:53px;" width="16" height="16" viewBox="0 0 16 16"><circle cx="8" cy="8" r="6.4" fill="#25324D" stroke="#548AF7" stroke-width="1.1"/><path d="M10.3 6.1 A2.9 2.9 0 1 0 10.3 9.9" fill="none" stroke="#548AF7" stroke-width="1.1"/><path d="M11 0.2 L11 6.3 L8 6.3 L8 3.6 Z" fill="#E35A48"/><path d="M12 0.4 L15.3 3.3 L12 6.2 Z" fill="#5FB865"/></svg><svg class="s" style="left:1793px;top:56px;" width="12" height="12" viewBox="0 0 12 12"><g stroke="#7E8187" stroke-width="1.2"><line x1="2" y1="2" x2="10" y2="10"/><line x1="10" y1="2" x2="2" y2="10"/></g></svg><svg class="s" style="left:1827.5px;top:57.5px;" width="12" height="7.0" viewBox="0 0 12 7.0"><polyline points="1,1 6.0,6.0 11,1" fill="none" stroke="#CED0D6" stroke-width="1.2"/></svg><svg class="s" style="left:1857px;top:54px;" width="6" height="14" viewBox="0 0 6 14"><rect x="1.9" y="0.8999999999999999" width="2.2" height="2.2" fill="#CED0D6"/><rect x="1.9" y="5.9" width="2.2" height="2.2" fill="#CED0D6"/><rect x="1.9" y="10.9" width="2.2" height="2.2" fill="#CED0D6"/></svg><div class="r" style="left:515px;top:82px;width:1px;height:967px;background:#313438;"></div><div class="r" style="left:1478px;top:82px;width:1px;height:967px;background:#313438;"></div><div class="r" style="left:549px;top:302px;width:1px;height:264px;background:#313438;"></div><div class="r" style="left:549px;top:654px;width:1px;height:395px;background:#313438;"></div><div class="r" style="left:581px;top:786px;width:1px;height:88px;background:#313438;"></div><div class="r" style="left:581px;top:940px;width:1px;height:88px;background:#313438;"></div><div class="r" style="left:442px;top:82px;width:1437px;height:967px;overflow:hidden;"><div class="ln" style="top:1.5px;">1</div><div class="c" style="left:76px;top:1.0px;color:#CF8E6D;">package</div><div class="c" style="left:132px;top:1.0px;color:#BCBEC4;"> tests.DonationAPIs;</div><div class="ln" style="top:23.5px;">2</div><div class="ln" style="top:45.5px;">3</div><div class="c" style="left:76px;top:45.0px;color:#CF8E6D;">import</div><div class="c" style="left:124px;top:45.0px;color:#BCBEC4;"> </div><div class="fold" style="left:132px;top:45px;">...</div><div class="ln" style="top:67.5px;">13</div><div class="ln" style="top:89.5px;">14</div><div class="c" style="left:76px;top:89.0px;color:#CF8E6D;">public class</div><div class="c" style="left:172px;top:89.0px;color:#BCBEC4;"> EasyGiveDonationAPITest {</div><div class="ln" style="top:111.5px;">15</div><div class="ln" style="top:133.5px;">16</div><div class="c" style="left:76px;top:133.0px;color:#BCBEC4;">    </div><div class="c" style="left:108px;top:133.0px;color:#CF8E6D;">private</div><div class="c" style="left:164px;top:133.0px;color:#BCBEC4;"> String </div><div class="c" style="left:228px;top:133.0px;color:#C77DBB;">authToken</div><div class="c" style="left:300px;top:133.0px;color:#BCBEC4;">;</div><div class="t" style="left:322px;top:134px;height:22px;line-height:22px;font-size:12.4px;color:#868A91;">13 usages</div><div class="ln" style="top:155.5px;">17</div><div class="ln" style="top:177.5px;">18</div><div class="c" style="left:76px;top:177.0px;color:#BCBEC4;">    </div><div class="c" style="left:108px;top:177.0px;color:#B3AE60;">@BeforeClass</div><div class="ln" style="top:199.5px;">19</div><div class="c" style="left:76px;top:199.0px;color:#BCBEC4;">    </div><div class="c" style="left:108px;top:199.0px;color:#CF8E6D;">public void</div><div class="c" style="left:196px;top:199.0px;color:#BCBEC4;"> </div><div class="c" style="left:204px;top:199.0px;color:#56A8F5;">ValidEmailandValidPasswordLogin</div><div class="c" style="left:452px;top:199.0px;color:#BCBEC4;">() </div><div class="c" style="left:476px;top:199.0px;color:#CF8E6D;">throws</div><div class="c" style="left:524px;top:199.0px;color:#BCBEC4;"> IOException {</div><div class="ln" style="top:221.5px;">20</div><div class="c" style="left:76px;top:221.0px;color:#BCBEC4;">        Map&lt;String, Object&gt; requestBody = RestClient.</div><div class="c" style="left:500px;top:221.0px;color:#BCBEC4;font-style:italic;">getTestData</div><div class="c" style="left:588px;top:221.0px;color:#BCBEC4;">(</div><div class="hint" style="left:598px;top:222px;width:33px;">key:</div><div class="c" style="left:634px;top:221.0px;color:#6AAB73;">&quot;ValidEmailandPassword&quot;</div><div class="c" style="left:818px;top:221.0px;color:#BCBEC4;">);</div><div class="ln" style="top:243.5px;">21</div><div class="ln" style="top:265.5px;">22</div><div class="c" style="left:76px;top:265.0px;color:#7A7E85;">        // Send POST request to register endpoint</div><div class="ln" style="top:287.5px;">23</div><div class="c" style="left:76px;top:287.0px;color:#BCBEC4;">        Response response = RestClient.</div><div class="c" style="left:388px;top:287.0px;color:#BCBEC4;font-style:italic;">postRequest</div><div class="c" style="left:476px;top:287.0px;color:#BCBEC4;">(</div><div class="hint" style="left:486px;top:288px;width:61px;">endpoint:</div><div class="c" style="left:550px;top:287.0px;color:#6AAB73;">&quot;/api/auth/login&quot;</div><div class="c" style="left:686px;top:287.0px;color:#BCBEC4;">, requestBody);</div><div class="ln" style="top:309.5px;">24</div><div class="ln" style="top:331.5px;">25</div><div class="c" style="left:76px;top:331.0px;color:#7A7E85;">        // Assert the response status code is 201</div><div class="ln" style="top:353.5px;">26</div><div class="c" style="left:76px;top:353.0px;color:#BCBEC4;">        Assert.</div><div class="c" style="left:196px;top:353.0px;color:#BCBEC4;font-style:italic;">assertEquals</div><div class="c" style="left:292px;top:353.0px;color:#BCBEC4;">(response.getStatusCode(), </div><div class="hint" style="left:510px;top:354px;width:64px;">expected:</div><div class="c" style="left:577px;top:353.0px;color:#2AACB8;">201</div><div class="c" style="left:601px;top:353.0px;color:#BCBEC4;">, </div><div class="hint" style="left:619px;top:354px;width:63px;">message:</div><div class="c" style="left:685px;top:353.0px;color:#6AAB73;">&quot;Status code mismatch!&quot;</div><div class="c" style="left:869px;top:353.0px;color:#BCBEC4;">);</div><div class="ln" style="top:375.5px;">27</div><div class="ln" style="top:397.5px;">28</div><div class="c" style="left:76px;top:397.0px;color:#7A7E85;">        // Check that accessToken is not null</div><div class="ln" style="top:419.5px;">29</div><div class="c" style="left:76px;top:419.0px;color:#BCBEC4;">        Assert.</div><div class="c" style="left:196px;top:419.0px;color:#BCBEC4;font-style:italic;">assertNotNull</div><div class="c" style="left:300px;top:419.0px;color:#BCBEC4;">(response.jsonPath().getString(</div><div class="hint" style="left:550px;top:420px;width:38px;">path:</div><div class="c" style="left:591px;top:419.0px;color:#6AAB73;">&quot;accessToken&quot;</div><div class="c" style="left:695px;top:419.0px;color:#BCBEC4;">), </div><div class="hint" style="left:721px;top:420px;width:62px;">message:</div><div class="c" style="left:786px;top:419.0px;color:#6AAB73;">&quot;Access token should not be null!&quot;</div><div class="c" style="left:1058px;top:419.0px;color:#BCBEC4;">);</div><div class="ln" style="top:441.5px;">30</div><div class="ln" style="top:463.5px;">31</div><div class="c" style="left:76px;top:463.0px;color:#BCBEC4;">        </div><div class="c" style="left:140px;top:463.0px;color:#C77DBB;">authToken</div><div class="c" style="left:212px;top:463.0px;color:#BCBEC4;"> = response.jsonPath().getString(</div><div class="hint" style="left:478px;top:464px;width:38px;">path:</div><div class="c" style="left:519px;top:463.0px;color:#6AAB73;">&quot;accessToken&quot;</div><div class="c" style="left:623px;top:463.0px;color:#BCBEC4;">);  </div><div class="c" style="left:655px;top:463.0px;color:#7A7E85;">// Adjust &quot;token&quot; based on your JSON structure</div><div class="ln" style="top:485.5px;">32</div><div class="c" style="left:76px;top:485.0px;color:#BCBEC4;">    }</div><div class="ln" style="top:507.5px;">33</div><div class="ln" style="top:529.5px;">34</div><div class="c" style="left:76px;top:529.0px;color:#BCBEC4;">    </div><div class="c" style="left:108px;top:529.0px;color:#B3AE60;">@Test</div><div class="c" style="left:148px;top:529.0px;color:#BCBEC4;">(priority = </div><div class="c" style="left:244px;top:529.0px;color:#2AACB8;">1</div><div class="c" style="left:252px;top:529.0px;color:#BCBEC4;">)</div><div class="ln" style="top:551.5px;">35</div><div class="c" style="left:76px;top:551.0px;color:#BCBEC4;">    </div><div class="c" style="left:108px;top:551.0px;color:#CF8E6D;">public void</div><div class="c" style="left:196px;top:551.0px;color:#BCBEC4;"> </div><div class="c" style="left:204px;top:551.0px;color:#56A8F5;">EasyGiveDonationSuccessfullyTest</div><div class="c" style="left:460px;top:551.0px;color:#BCBEC4;">() </div><div class="c" style="left:484px;top:551.0px;color:#CF8E6D;">throws</div><div class="c" style="left:532px;top:551.0px;color:#BCBEC4;"> IOException {</div><div class="ln" style="top:573.5px;">36</div><div class="ln" style="top:595.5px;">37</div><div class="c" style="left:76px;top:595.0px;color:#7A7E85;">        // Get test data for valid registration</div><div class="ln" style="top:617.5px;">38</div><div class="c" style="left:76px;top:617.0px;color:#BCBEC4;">        Map&lt;String, Object&gt; requestBody = RestClient.</div><div class="c" style="left:500px;top:617.0px;color:#BCBEC4;font-style:italic;">getTestData</div><div class="c" style="left:588px;top:617.0px;color:#BCBEC4;">(</div><div class="hint" style="left:598px;top:618px;width:33px;">key:</div><div class="c" style="left:634px;top:617.0px;color:#6AAB73;">&quot;SuccessfullyEasyGiveDonation&quot;</div><div class="c" style="left:874px;top:617.0px;color:#BCBEC4;">);</div><div class="ln" style="top:639.5px;">39</div><div class="ln" style="top:661.5px;">40</div><div class="c" style="left:76px;top:661.0px;color:#7A7E85;">        // Send POST request</div><div class="ln" style="top:683.5px;">41</div><div class="c" style="left:76px;top:683.0px;color:#BCBEC4;">        Response response = RestAssured.</div><div class="c" style="left:396px;top:683.0px;color:#BCBEC4;font-style:italic;">given</div><div class="c" style="left:436px;top:683.0px;color:#BCBEC4;">()</div><div class="ln" style="top:705.5px;">42</div><div class="c" style="left:76px;top:705.0px;color:#BCBEC4;">                .header(</div><div class="hint" style="left:270px;top:706px;width:18px;">s:</div><div class="c" style="left:291px;top:705.0px;color:#6AAB73;">&quot;Authorization&quot;</div><div class="c" style="left:411px;top:705.0px;color:#BCBEC4;">, </div><div class="hint" style="left:429px;top:706px;width:19px;">o:</div><div class="c" style="left:451px;top:705.0px;color:#6AAB73;">&quot;Bearer &quot;</div><div class="c" style="left:523px;top:705.0px;color:#BCBEC4;"> + </div><div class="c" style="left:547px;top:705.0px;color:#C77DBB;">authToken</div><div class="c" style="left:619px;top:705.0px;color:#BCBEC4;">)</div><div class="ln" style="top:727.5px;">43</div><div class="c" style="left:76px;top:727.0px;color:#BCBEC4;">                .contentType(ContentType.</div><div class="c" style="left:404px;top:727.0px;color:#C77DBB;font-style:italic;">JSON</div><div class="c" style="left:436px;top:727.0px;color:#BCBEC4;">)</div><div class="ln" style="top:749.5px;">44</div><div class="c" style="left:76px;top:749.0px;color:#BCBEC4;">                .body(requestBody)</div><div class="ln" style="top:771.5px;">45</div><div class="c" style="left:76px;top:771.0px;color:#BCBEC4;">                .post(</div><div class="hint" style="left:254px;top:772px;width:18px;">s:</div><div class="c" style="left:275px;top:771.0px;color:#6AAB73;">&quot;/api/donations/easy-give&quot;</div><div class="c" style="left:483px;top:771.0px;color:#BCBEC4;">);</div><div class="ln" style="top:793.5px;">46</div><div class="ln" style="top:815.5px;">47</div><div class="c" style="left:76px;top:815.0px;color:#BCBEC4;">        </div><div class="c" style="left:140px;top:815.0px;color:#CF8E6D;">if</div><div class="c" style="left:156px;top:815.0px;color:#BCBEC4;"> (response.getStatusCode() != </div><div class="c" style="left:396px;top:815.0px;color:#2AACB8;">201</div><div class="c" style="left:420px;top:815.0px;color:#BCBEC4;">)</div><div class="ln" style="top:837.5px;">48</div><div class="c" style="left:76px;top:837.0px;color:#BCBEC4;">        {</div><div class="ln" style="top:859.5px;">49</div><div class="c" style="left:76px;top:859.0px;color:#BCBEC4;">            System.</div><div class="c" style="left:228px;top:859.0px;color:#C77DBB;font-style:italic;">out</div><div class="c" style="left:252px;top:859.0px;color:#BCBEC4;">.println(</div><div class="c" style="left:324px;top:859.0px;color:#6AAB73;">&quot;End Point: /api/donations/easy-give&quot;</div><div class="c" style="left:620px;top:859.0px;color:#BCBEC4;">);</div><div class="ln" style="top:881.5px;">50</div><div class="c" style="left:76px;top:881.0px;color:#BCBEC4;">            System.</div><div class="c" style="left:228px;top:881.0px;color:#C77DBB;font-style:italic;">out</div><div class="c" style="left:252px;top:881.0px;color:#BCBEC4;">.println(</div><div class="c" style="left:324px;top:881.0px;color:#6AAB73;">&quot;Request Payload: SuccessfullyEasyGiveDonation&quot;</div><div class="c" style="left:700px;top:881.0px;color:#BCBEC4;">);</div><div class="ln" style="top:903.5px;">51</div><div class="c" style="left:76px;top:903.0px;color:#BCBEC4;">            System.</div><div class="c" style="left:228px;top:903.0px;color:#C77DBB;font-style:italic;">out</div><div class="c" style="left:252px;top:903.0px;color:#BCBEC4;">.println(</div><div class="c" style="left:324px;top:903.0px;color:#6AAB73;">&quot;Request Body:&quot;</div><div class="c" style="left:444px;top:903.0px;color:#BCBEC4;">);</div><div class="ln" style="top:925.5px;">52</div><div class="c" style="left:76px;top:925.0px;color:#BCBEC4;">            response.prettyPrint();</div><div class="ln" style="top:947.5px;">53</div><div class="c" style="left:76px;top:947.0px;color:#BCBEC4;">        }</div></div><svg class="s" style="left:485px;top:174px;" width="16" height="14" viewBox="0 0 16 14"><g fill="none" stroke="#5FB865" stroke-width="1.3" stroke-linejoin="round"><path d="M2 1.5 L8.5 7 L2 12.5 Z"/><path d="M7 1.5 L13.5 7 L7 12.5"/></g></svg><svg class="s" style="left:486px;top:636px;" width="14" height="14" viewBox="0 0 14 14"><path d="M2 1.5 L12.5 7 L2 12.5 Z" fill="none" stroke="#5FB865" stroke-width="1.3" stroke-linejoin="round"/></svg><svg class="s" style="left:505.75px;top:132.5px;" width="5.5" height="9" viewBox="0 0 5.5 9"><polyline points="1,1 4.5,4.5 1,8" fill="none" stroke="#8C8F94" stroke-width="1.1"/></svg><svg class="s" style="left:686px;top:298px;" width="66" height="3" viewBox="0 0 66 3"><path d="M0 2.5 L2 0.5 L4 2.5 L6 0.5 L8 2.5 L10 0.5 L12 2.5 L14 0.5 L16 2.5 L18 0.5 L20 2.5 L22 0.5 L24 2.5 L26 0.5 L28 2.5 L30 0.5 L32 2.5 L34 0.5 L36 2.5 L38 0.5 L40 2.5 L42 0.5 L44 2.5 L46 0.5 L48 2.5 L50 0.5 L52 2.5 L54 0.5 L56 2.5 L58 0.5 L60 2.5 L62 0.5 L64 2.5" fill="none" stroke="#5E9C66" stroke-width="0.9"/></svg><svg class="s" style="left:1124px;top:320px;" width="66" height="3" viewBox="0 0 66 3"><path d="M0 2.5 L2 0.5 L4 2.5 L6 0.5 L8 2.5 L10 0.5 L12 2.5 L14 0.5 L16 2.5 L18 0.5 L20 2.5 L22 0.5 L24 2.5 L26 0.5 L28 2.5 L30 0.5 L32 2.5 L34 0.5 L36 2.5 L38 0.5 L40 2.5 L42 0.5 L44 2.5 L46 0.5 L48 2.5 L50 0.5 L52 2.5 L54 0.5 L56 2.5 L58 0.5 L60 2.5 L62 0.5 L64 2.5" fill="none" stroke="#5E9C66" stroke-width="0.9"/></svg><svg class="s" style="left:1806px;top:87px;" width="15" height="16" viewBox="0 0 15 16"><polyline points="2.5,5 6.3,8.8 13,2.2" fill="none" stroke="#5FB865" stroke-width="2"/><path d="M2 14.5 L4.2 12 L6.4 14.5 L8.6 12 L10.8 14.5 L13 12" fill="none" stroke="#5FB865" stroke-width="1"/></svg><svg class="s" style="left:1841.0px;top:92.0px;" width="10" height="6.0" viewBox="0 0 10 6.0"><polyline points="1,5.0 5.0,1 9,5.0" fill="none" stroke="#CED0D6" stroke-width="1.2"/></svg><svg class="s" style="left:1862.0px;top:92.0px;" width="10" height="6.0" viewBox="0 0 10 6.0"><polyline points="1,1 5.0,5.0 9,1" fill="none" stroke="#CED0D6" stroke-width="1.2"/></svg><div class="r" style="left:1870px;top:108px;width:8px;height:96px;border-radius:1px;background:#46484C;"></div><div class="t" style="left:550.5px;top:41px;height:40px;line-height:40px;font-size:13.9px;color:#DFE1E5;font-weight:normal;letter-spacing:0.040px;">CommunityNeediesSupportedAPITest.java</div><div class="t" style="left:877.5px;top:41px;height:40px;line-height:40px;font-size:13.9px;color:#DFE1E5;font-weight:normal;letter-spacing:0.007px;">CommunityRecurrentDonationStatsAPITest.java</div><div class="t" style="left:1236.5px;top:41px;height:40px;line-height:40px;font-size:13.9px;color:#DFE1E5;font-weight:normal;letter-spacing:0.044px;">CommunityNeediesSupportedStatsAPITest.java</div><div class="t" style="left:1595.5px;top:41px;height:40px;line-height:40px;font-size:13.9px;color:#DFE1E5;font-weight:normal;letter-spacing:-0.152px;">EasyGiveDonationAPITest.java</div><div class="t" style="left:1823px;top:83px;height:24px;line-height:24px;font-size:13.9px;color:#CED0D6;font-weight:normal;">8</div><svg class="s" style="left:1890px;top:50px;" width="20" height="22" viewBox="0 0 20 22"><g fill="none" stroke="#CED0D6" stroke-width="1.3" stroke-linejoin="round"><path d="M2.5 17 Q4.5 15 4.5 10.5 Q4.5 4.5 10 4.5 Q15.5 4.5 15.5 10.5 Q15.5 15 17.5 17 Z"/><path d="M8.3 19.3 Q10 20.8 11.7 19.3"/></g><circle cx="16.5" cy="4.5" r="3.6" fill="#E0604E"/></svg><svg class="s" style="left:1891px;top:92px;" width="18" height="17" viewBox="0 0 18 17"><polyline points="10.36,8.33 10.39,8.23 10.41,8.13 10.42,8.02 10.42,7.91 10.40,7.80 10.37,7.68 10.32,7.57 10.26,7.46 10.18,7.34 10.09,7.24 9.99,7.13 9.87,7.03 9.74,6.94 9.60,6.86 9.44,6.78 9.27,6.72 9.09,6.66 8.90,6.62 8.71,6.59 8.51,6.57 8.30,6.57 8.09,6.58 7.87,6.60 7.66,6.64 7.44,6.70 7.23,6.77 7.03,6.86 6.83,6.97 6.64,7.09 6.45,7.22 6.29,7.37 6.13,7.53 5.99,7.71 5.87,7.89 5.76,8.09 5.68,8.30 5.61,8.51 5.57,8.73 5.55,8.96 5.56,9.19 5.59,9.43 5.64,9.66 5.72,9.90 5.83,10.13 5.96,10.35 6.12,10.57 6.30,10.78 6.50,10.98 6.73,11.17 6.98,11.35 7.25,11.51 7.54,11.65 7.85,11.78 8.17,11.88 8.51,11.97 8.86,12.03 9.22,12.07 9.59,12.09 9.96,12.08 10.33,12.05 10.71,11.99 11.08,11.91 11.44,11.80 11.80,11.67 12.14,11.51 12.47,11.33 12.79,11.12 13.09,10.90 13.36,10.65 13.61,10.38 13.84,10.09 14.03,9.79 14.20,9.47 14.33,9.14 14.43,8.79 14.50,8.44 14.53,8.08 14.52,7.72 14.48,7.35 14.40,6.99 14.28,6.63 14.12,6.27 13.92,5.93 13.69,5.59 13.42,5.27 13.12,4.96 12.78,4.67 12.41,4.41 12.01,4.16 11.59,3.94 11.14,3.75 10.67,3.58 10.18,3.45 9.67,3.35 9.15,3.28 8.62,3.24 8.08,3.24 7.54,3.27 7.00,3.34 6.47,3.45 5.94,3.59 5.43,3.77 4.93,3.98 4.45,4.22 4.00,4.50 3.57,4.81 3.17,5.14 2.81,5.51 2.48,5.90 2.18,6.31 1.93,6.75 1.73,7.20 1.57,7.67 1.45,8.15 1.39,8.64 1.37,9.13 1.41,9.63 1.49,10.13 1.63,10.62 1.82,11.11 2.06,11.59 2.35,12.05 2.69,12.49 3.07,12.92 3.50,13.32 3.97,13.69 4.48,14.03 5.02,14.35 5.61,14.62 6.22,14.86 6.85,15.06 7.51,15.22 8.19,15.34 8.88,15.42 9.59,15.44 10.29,15.43 11.00,15.36 11.70,15.25 12.39,15.10 13.07,14.89" fill="none" stroke="#CED0D6" stroke-width="1.4" stroke-linecap="round"/></svg><div class="t" style="left:1891px;top:128px;height:24px;line-height:24px;font-size:23px;font-style:italic;color:#CED0D6;font-family:"Liberation Sans", sans-serif;">m</div><svg class="s" style="left:14px;top:1058px;" width="9" height="10" viewBox="0 0 9 10"><rect x="1" y="1.5" width="7" height="7" rx="1" fill="none" stroke="#548AF7" stroke-width="1.2"/></svg><svg class="s" style="left:200.0px;top:1058.5px;" width="6.0" height="10" viewBox="0 0 6.0 10"><polyline points="1,1 5.0,5.0 1,9" fill="none" stroke="#A8ADB6" stroke-width="1.1"/></svg><svg class="s" style="left:244.0px;top:1058.5px;" width="6.0" height="10" viewBox="0 0 6.0 10"><polyline points="1,1 5.0,5.0 1,9" fill="none" stroke="#A8ADB6" stroke-width="1.1"/></svg><svg class="s" style="left:293.0px;top:1058.5px;" width="6.0" height="10" viewBox="0 0 6.0 10"><polyline points="1,1 5.0,5.0 1,9" fill="none" stroke="#A8ADB6" stroke-width="1.1"/></svg><svg class="s" style="left:340.0px;top:1058.5px;" width="6.0" height="10" viewBox="0 0 6.0 10"><polyline points="1,1 5.0,5.0 1,9" fill="none" stroke="#A8ADB6" stroke-width="1.1"/></svg><svg class="s" style="left:397.0px;top:1058.5px;" width="6.0" height="10" viewBox="0 0 6.0 10"><polyline points="1,1 5.0,5.0 1,9" fill="none" stroke="#A8ADB6" stroke-width="1.1"/></svg><svg class="s" style="left:503.6px;top:1058.5px;" width="6.0" height="10" viewBox="0 0 6.0 10"><polyline points="1,1 5.0,5.0 1,9" fill="none" stroke="#A8ADB6" stroke-width="1.1"/></svg><svg class="s" style="left:519px;top:1055.5px;" width="16" height="16" viewBox="0 0 16 16"><circle cx="8" cy="8" r="6.4" fill="#25324D" stroke="#548AF7" stroke-width="1.1"/><path d="M10.3 6.1 A2.9 2.9 0 1 0 10.3 9.9" fill="none" stroke="#548AF7" stroke-width="1.1"/><path d="M11 0.2 L11 6.3 L8 6.3 L8 3.6 Z" fill="#E35A48"/><path d="M12 0.4 L15.3 3.3 L12 6.2 Z" fill="#5FB865"/></svg><svg class="s" style="left:1887px;top:1054px;" width="17" height="17" viewBox="0 0 17 17"><g fill="none" stroke="#A8ADB6" stroke-width="1.2"><rect x="1.5" y="8" width="9" height="7" rx="1"/><path d="M8 8 V5 Q8 2 11 2 Q14 2 14 5 V6"/></g><rect x="5.4" y="10.8" width="1.3" height="2" fill="#A8ADB6"/></svg><div class="t" style="left:26px;top:1050px;height:29px;line-height:29px;font-size:13.9px;color:#A8ADB6;font-weight:normal;letter-spacing:0.088px;">Givers-APIAutomationTest</div><div class="t" style="left:216.5px;top:1050px;height:29px;line-height:29px;font-size:13.9px;color:#A8ADB6;font-weight:normal;letter-spacing:-0.177px;">src</div><div class="t" style="left:259px;top:1050px;height:29px;line-height:29px;font-size:13.9px;color:#A8ADB6;font-weight:normal;letter-spacing:0.402px;">test</div><div class="t" style="left:308px;top:1050px;height:29px;line-height:29px;font-size:13.9px;color:#A8ADB6;font-weight:normal;letter-spacing:-0.371px;">java</div><div class="t" style="left:356.5px;top:1050px;height:29px;line-height:29px;font-size:13.9px;color:#A8ADB6;font-weight:normal;letter-spacing:0.231px;">tests</div><div class="t" style="left:412px;top:1050px;height:29px;line-height:29px;font-size:13.9px;color:#A8ADB6;font-weight:normal;letter-spacing:-0.196px;">DonationAPIs</div><div class="t" style="left:539px;top:1050px;height:29px;line-height:29px;font-size:13.9px;color:#A8ADB6;font-weight:normal;letter-spacing:-0.084px;">EasyGiveDonationAPITest</div><div class="t" style="left:1650px;top:1050px;height:29px;line-height:29px;font-size:13.9px;color:#A8ADB6;font-weight:normal;letter-spacing:0.200px;">420:93</div><div class="t" style="left:1710px;top:1050px;height:29px;line-height:29px;font-size:13.9px;color:#A8ADB6;font-weight:normal;letter-spacing:-1.320px;">CRLF</div><div class="t" style="left:1758px;top:1050px;height:29px;line-height:29px;font-size:13.9px;color:#A8ADB6;font-weight:normal;letter-spacing:0.128px;">UTF-8</div><div class="t" style="left:1814.7px;top:1050px;height:29px;line-height:29px;font-size:13.9px;color:#A8ADB6;font-weight:normal;letter-spacing:-0.076px;">4 spaces</div><svg class="s" style="left:835px;top:1000px" width="250" height="65" viewBox="835 1000 250 65">
<g fill="#67696D">
<path d="M844.1 1025 L850.9 1029 V1040 Q850.9 1048.1 859 1048.1 H883.9 Q891.9 1048.1 891.9 1040 V1026.25 L898.75 1025 V1042 Q898.75 1055.9 885 1055.9 H858 Q844.1 1055.9 844.1 1042 Z"/>
<path d="M902.8 1014.4 L909.7 1010.9 V1042 Q909.7 1048.1 915.7 1048.1 H927.1 Q933.1 1048.1 933.1 1042 V1028.4 L940 1025.9 V1042.5 Q940 1048.1 945.8 1048.1 H947 Q952.8 1048.1 952.8 1042.5 V1029.8 L959.7 1026.2 V1042.5 Q959.7 1048.1 965.5 1048.1 H966.3 Q972.1 1048.1 972.1 1042.5 V1029.8 L979 1026.2 V1048.1 H1002 V1055.9 H914 Q902.8 1055.9 902.8 1045 Z"/>
<path d="M988.5 1011.2 H1002 V1018.1 H996.2 V1031 L988.5 1036 Z"/>
<path d="M1004.6 1011.2 H1018.8 V1018.1 H1004.6 Z"/>
<path d="M989 1040.5 A16 15.5 0 0 1 1002 1025.3 V1033.4 A8 7.5 0 0 0 997 1040.5 Z"/>
<path d="M1004.6 1025 A16 15.5 0 0 1 1021 1040.5 A16 15.5 0 0 1 1004.6 1056 V1048 A8 7.5 0 0 0 1013 1040.5 A8 7.5 0 0 0 1004.6 1033 Z"/>
<path d="M1017 1048.6 H1065.5 V1045 Q1065.5 1032 1050.5 1032 Q1043 1032 1038.5 1036.4 L1034.9 1032 Q1041 1025.4 1050.5 1025.4 Q1073.6 1025.4 1073.6 1045 V1055.9 H1012 Z"/>
<path d="M858.8 1017.8 L865 1011.9 L871.2 1017.8 L865 1023.6999999999999 Z"/><path d="M873.8 1016.9 L880 1011.0 L886.2 1016.9 L880 1022.8 Z"/><path d="M1045.1 1016.7 L1051.3 1010.8000000000001 L1057.5 1016.7 L1051.3 1022.6 Z"/>
</g></svg></body></html>
